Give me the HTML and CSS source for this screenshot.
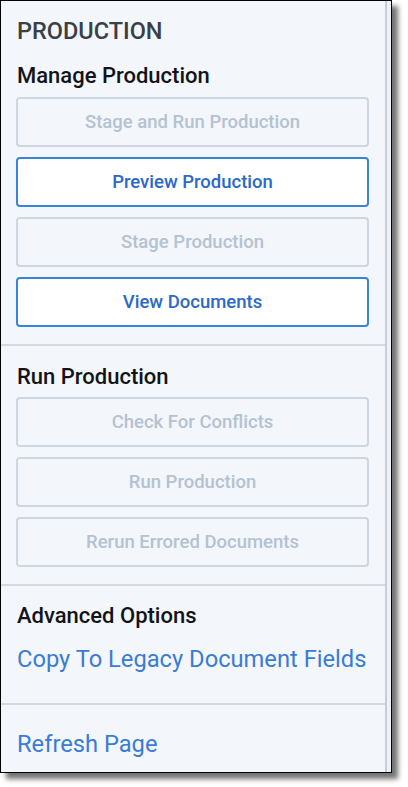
FILE: index.html
```html
<!DOCTYPE html>
<html lang="en">
<head>
<meta charset="utf-8">
<title>Production</title>
<link rel="stylesheet" href="styles.css">
</head>
<body>
<div class="frame">
  <aside class="panel">
    <section class="section section-manage">
      <h1 class="panel-title">PRODUCTION</h1>
      <h2 class="section-title">Manage Production</h2>
      <div class="button-list">
        <button class="action disabled" disabled>Stage and Run Production</button>
        <button class="action">Preview Production</button>
        <button class="action disabled" disabled>Stage Production</button>
        <button class="action">View Documents</button>
      </div>
    </section>
    <section class="section section-run">
      <h2 class="section-title">Run Production</h2>
      <div class="button-list">
        <button class="action disabled" disabled>Check For Conflicts</button>
        <button class="action disabled" disabled>Run Production</button>
        <button class="action disabled" disabled>Rerun Errored Documents</button>
      </div>
    </section>
    <section class="section section-advanced">
      <h2 class="section-title">Advanced Options</h2>
      <a class="link link-copy" href="#">Copy To Legacy Document Fields</a>
    </section>
    <section class="section section-refresh">
      <a class="link" href="#">Refresh Page</a>
    </section>
  </aside>
  <div class="gutter"></div>
</div>
</body>
</html>
```

FILE: styles.css
```css
* { box-sizing: border-box; }

html, body {
  margin: 0;
  padding: 0;
  background: #ffffff;
}

body {
  font-family: Roboto, "Liberation Sans", Arial, sans-serif;
  width: 408px;
  height: 787px;
  overflow: hidden;
}

.frame {
  width: 392px;
  height: 773px;
  border: 1px solid #000;
  display: flex;
  background: #f3f6fa;
  box-shadow: 6px 6px 5px rgba(0, 0, 0, 0.55);
}

.panel {
  flex: 1;
  display: flex;
  flex-direction: column;
  border-right: 2px solid #c4cdd8;
}

.gutter {
  width: 4px;
  background: #eef2f7;
}

.section {
  padding: 0 16px 0 15px;
}

.section + .section {
  border-top: 2px solid #d2dae4;
}

.section-manage { padding-top: 16px; padding-bottom: 17px; }
.section-run { padding-top: 19px; padding-bottom: 17px; }
.section-advanced { padding-top: 18px; padding-bottom: 30px; }
.section-refresh { padding-top: 25px; flex: 1; }

.panel-title {
  margin: 0;
  font-size: 23.5px;
  line-height: 28px;
  font-weight: 500;
  color: #3b3f46;
  padding-left: 1px;
}

.section-title {
  margin: 0;
  font-size: 22px;
  line-height: 24px;
  font-weight: 500;
  color: #121417;
  padding-left: 1px;
}

.section-manage .section-title { margin-top: 19px; }

.button-list {
  display: flex;
  flex-direction: column;
  gap: 10px;
  margin-top: 9px;
}

.section-run .button-list { margin-top: 8px; }

.action {
  height: 50px;
  width: 100%;
  border-radius: 4px;
  border: 2px solid #3884dc;
  background: #ffffff;
  color: #2a69c9;
  font-family: Roboto, "Liberation Sans", Arial, sans-serif;
  font-size: 18.5px;
  font-weight: 500;
  padding: 0;
  cursor: pointer;
}

.action.disabled {
  border-color: #cdd6e1;
  background: #f3f6fa;
  color: #b4c2d2;
  cursor: default;
}

.link {
  display: block;
  font-size: 23.7px;
  line-height: 28px;
  color: #3a7cd4;
  text-decoration: none;
  padding-left: 1px;
}

.link-copy { margin-top: 17px; }
```
